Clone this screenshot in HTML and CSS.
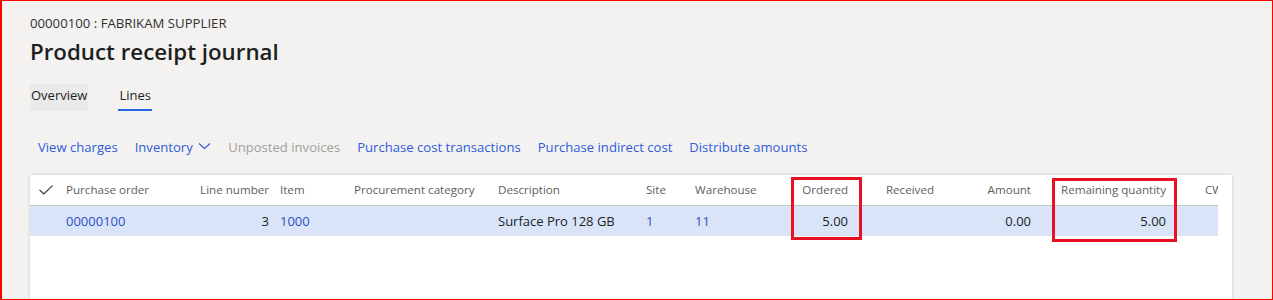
FILE: index.html
```html
<!DOCTYPE html>
<html lang="en">
<head>
    <meta charset="UTF-8">
    <meta name="viewport" content="width=device-width, initial-scale=1.0">
    <title>Product receipt journal</title>
    <link rel="stylesheet" href="styles.css">
</head>
<body>
    <div class="frame">
        <div class="caption">00000100 : FABRIKAM SUPPLIER</div>
        <h1 class="title">Product receipt journal</h1>

        <div class="tabs">
            <span class="tab tab-hover">Overview</span>
            <span class="tab active">Lines</span>
        </div>

        <div class="actions">
            <a class="action">View charges</a>
            <a class="action">Inventory
                <svg class="chevron" width="13" height="8" viewBox="0 0 13 8"><path d="M1 1.5 L6.5 6.5 L12 1.5" fill="none" stroke="currentColor" stroke-width="1.2"/></svg>
            </a>
            <a class="action disabled">Unposted invoices</a>
            <a class="action">Purchase cost transactions</a>
            <a class="action">Purchase indirect cost</a>
            <a class="action">Distribute amounts</a>
        </div>

        <div class="card">
            <div class="grid">
                <div class="row head">
                    <div class="cell check">
                        <svg width="14" height="10" viewBox="0 0 14 10"><path d="M0.5 4.8 L4.8 9 L13.5 0.6" fill="none" stroke="#323130" stroke-width="1.1"/></svg>
                    </div>
                    <div class="cell">Purchase order</div>
                    <div class="cell num">Line number</div>
                    <div class="cell">Item</div>
                    <div class="cell">Procurement category</div>
                    <div class="cell">Description</div>
                    <div class="cell">Site</div>
                    <div class="cell">Warehouse</div>
                    <div class="cell num">Ordered</div>
                    <div class="cell num">Received</div>
                    <div class="cell num">Amount</div>
                    <div class="cell num">Remaining quantity</div>
                    <div class="cell cw">CW</div>
                </div>
                <div class="row selected">
                    <div class="cell check"></div>
                    <div class="cell link">00000100</div>
                    <div class="cell num">3</div>
                    <div class="cell link">1000</div>
                    <div class="cell"></div>
                    <div class="cell">Surface Pro 128 GB</div>
                    <div class="cell link">1</div>
                    <div class="cell link">11</div>
                    <div class="cell num">5.00</div>
                    <div class="cell num"></div>
                    <div class="cell num">0.00</div>
                    <div class="cell num">5.00</div>
                    <div class="cell cw"></div>
                </div>
            </div>
            <div class="mark mark-ordered"></div>
            <div class="mark mark-remaining"></div>
        </div>
    </div>
</body>
</html>
```

FILE: styles.css
```css
body {
    margin: 0;
    font-family: "Open Sans", Arial, sans-serif;
    color: #201f1e;
}
.frame {
    height: 300px;
    box-sizing: border-box;
    overflow: hidden;
    background-color: #f3f2f1;
    border-left: 2px solid #ff0000;
    border-top: 1px solid #ff0000;
    border-right: 1px solid #ff0000;
    border-bottom: 1px solid #ff0000;
    padding: 13px 0 0 28px;
}
.caption {
    font-size: 13.2px;
    line-height: 18px;
    color: #323130;
}
.title {
    margin: 5px 0 0;
    font-size: 22.3px;
    font-weight: 600;
    line-height: 30px;
    color: #201f1e;
}
.tabs {
    display: flex;
    gap: 30px;
    margin-top: 17px;
}
.tab {
    position: relative;
    height: 27px;
    box-sizing: border-box;
    padding: 1px 1px 0;
    font-size: 13px;
    line-height: 20px;
    color: #201f1e;
}
.tab-hover {
    background-color: #eaeaea;
}
.tab.active::after {
    content: "";
    position: absolute;
    left: 0;
    right: 0;
    bottom: 0;
    height: 2px;
    background-color: #2266e3;
}
.actions {
    display: flex;
    gap: 17px;
    margin-top: 26px;
    padding-left: 8px;
    font-size: 13.1px;
    line-height: 20px;
}
.action {
    color: #2f5bdb;
    white-space: nowrap;
}
.action.disabled {
    color: #a19f9d;
}
.chevron {
    margin-left: 2px;
    vertical-align: 2px;
}
.card {
    position: relative;
    width: 1202px;
    height: 140px;
    margin-top: 18px;
    background-color: #fff;
    box-shadow: 0 0 3px rgba(0, 0, 0, 0.18);
}
.grid {
    width: 1188px;
    overflow: hidden;
}
.row {
    display: grid;
    grid-template-columns: 28px 132px 82px 74px 144px 148px 49px 93px 71px 86px 97px 135px 100px;
    height: 30px;
    font-size: 13px;
    line-height: 30px;
}
.row.head {
    font-size: 11.6px;
    line-height: 29px;
    color: #605e5c;
    border-bottom: 1px solid #c8c6c4;
}
.row.selected {
    background-color: #d9e4f9;
}
.cell {
    padding: 0 8px;
    white-space: nowrap;
    overflow: hidden;
}
.cell.num {
    text-align: right;
    padding: 0 3px 0 0;
}
.cell.check {
    padding: 0 0 0 9px;
    display: flex;
    align-items: center;
}
.cell.cw {
    padding-left: 36px;
}
.cell.link {
    color: #2b4fc4;
}
.mark {
    position: absolute;
    border: 3px solid #e81123;
}
.mark-ordered {
    left: 761px;
    top: 2px;
    width: 65px;
    height: 57px;
}
.mark-remaining {
    left: 1022px;
    top: 3px;
    width: 119px;
    height: 58px;
}
```
